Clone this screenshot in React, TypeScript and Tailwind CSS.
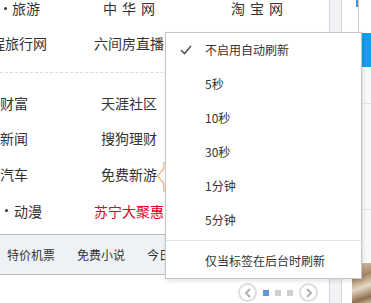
import { Fragment } from 'react';

const menuItems = ['不启用自动刷新', '5秒', '10秒', '30秒', '1分钟', '5分钟'];

function Dot({ className }: { className: string }) {
  return <span className={`inline-block w-[3px] h-[3px] rounded-full bg-[#333] ${className}`} />;
}

function Spaced({ chars }: { chars: string[] }) {
  return (
    <span className="flex gap-[5px]">
      {chars.map((c) => (
        <span key={c}>{c}</span>
      ))}
    </span>
  );
}

function Circle({ dir }: { dir: 'left' | 'right' }) {
  return (
    <span className="w-[19px] h-[19px] rounded-full border-2 border-[#dedede] flex items-center justify-center">
      <svg width="8" height="10" viewBox="0 0 8 10">
        {dir === 'left' ? (
          <polyline points="6,1 2,5 6,9" fill="none" stroke="#b0b0b0" strokeWidth="2" />
        ) : (
          <polyline points="2,1 6,5 2,9" fill="none" stroke="#b0b0b0" strokeWidth="2" />
        )}
      </svg>
    </span>
  );
}

export default function App() {
  return (
    <div className="relative w-[371px] h-[303px] overflow-hidden bg-white flex text-[#333] font-['Noto_Sans_CJK_SC','Noto_Sans',sans-serif]">
      {/* left panel */}
      <div className="w-[329px] flex flex-col text-[14px] leading-none">
        <div className="-mt-[9px] h-[34px] flex items-center">
          <div className="w-[64px] flex items-center pl-[4px]">
            <Dot className="mr-[5px]" />
            <span>旅游</span>
          </div>
          <div className="w-[130px] flex justify-center">
            <Spaced chars={['中', '华', '网']} />
          </div>
          <div className="w-[126px] flex justify-center">
            <Spaced chars={['淘', '宝', '网']} />
          </div>
        </div>
        <div className="h-[35px] flex items-center">
          <div className="w-[64px] whitespace-nowrap">
            <span className="-ml-[23px] inline-block">携程旅行网</span>
          </div>
          <div className="w-[130px] flex justify-center whitespace-nowrap">六间房直播</div>
        </div>
        <div className="mt-[12px] border-t border-dashed border-[#dcdcdc]" />
        <div className="mt-[12px] h-[35px] flex items-center">
          <div className="w-[64px]">财富</div>
          <div className="w-[130px] flex justify-center">天涯社区</div>
        </div>
        <div className="h-[35px] flex items-center">
          <div className="w-[64px]">新闻</div>
          <div className="w-[130px] flex justify-center">搜狗理财</div>
        </div>
        <div className="h-[37px] flex items-center">
          <div className="w-[64px]">汽车</div>
          <div className="w-[130px] flex justify-center">免费新游</div>
        </div>
        <div className="h-[37px] flex items-center">
          <div className="w-[64px] flex items-center pl-[5px]">
            <Dot className="mr-[6px]" />
            <span>动漫</span>
          </div>
          <div className="w-[130px] flex justify-center text-[#e0001b] whitespace-nowrap">苏宁大聚惠</div>
        </div>
        <div className="mt-[5px] h-[41px] border-y border-[#b9bdc1] bg-[#eef2f4] flex items-center pl-[7px] gap-[22px] text-[12px] whitespace-nowrap">
          <span>特价机票</span>
          <span>免费小说</span>
          <span>今日</span>
        </div>
        <div className="mt-[8px] flex justify-end items-center pr-[11px] gap-[6px]">
          <Circle dir="left" />
          <span className="w-[6px] h-[6px] bg-[#5f95d4]" />
          <span className="w-[6px] h-[6px] bg-[#cfcfcf]" />
          <span className="w-[6px] h-[6px] bg-[#cfcfcf]" />
          <Circle dir="right" />
        </div>
      </div>

      {/* scroll strip */}
      <div className="w-[13px] h-full border-x border-[#d2d6da] bg-[#f1f3f5]" />

      {/* right side */}
      <div className="w-[16px] h-full flex justify-end">
        <span className="w-[2px] h-[7px] bg-[#4a90d9]" />
      </div>
      <div className="w-[13px] h-full border-l border-[#c8c8c8] flex flex-col">
        <div className="h-[33px] bg-white" />
        <div className="h-[34px] bg-[#139ff0]" />
        <div className="h-[37px] bg-[#f8f8f8] border-b border-[#e6e6e6]" />
        <div className="h-[106px] bg-[#f8f8f8] border-b border-[#e6e6e6]" />
        <div className="flex-1 bg-[#f8f8f8]" />
      </div>

      {/* photo in the corner */}
      <div className="absolute left-[352px] top-[263px] w-[19px] h-[40px] bg-[linear-gradient(160deg,#d9cbbb_0%,#a78866_35%,#e6d8c6_60%,#8e6f52_85%,#cdb89e_100%)]" />

      {/* tooltip edge beside 免费新游 */}
      <svg className="absolute left-[155px] top-[160px]" width="11" height="34" viewBox="155 160 11 34">
        <polyline
          points="164,162 163.5,169 157.5,176 163.5,183 164,192"
          fill="#fffaf4"
          stroke="#e3b488"
          strokeWidth="1.2"
        />
      </svg>

      {/* refresh menu */}
      <div className="absolute left-[165px] top-[32px] w-[197px] bg-white border border-[#c6c6c6] shadow-[1px_2px_4px_rgba(0,0,0,0.12)] text-[12px] leading-none">
        {menuItems.map((label, i) => (
          <div key={label} className="h-[34px] flex items-center">
            <span className="w-[39px] pl-[14px] flex items-center">
              {i === 0 && (
                <svg width="12" height="10" viewBox="0 0 12 10">
                  <polyline points="1,5 4.5,8.5 11,1" fill="none" stroke="#555" strokeWidth="1.6" />
                </svg>
              )}
            </span>
            <span>{label}</span>
          </div>
        ))}
        <Fragment>
          <div className="my-[3px] h-px bg-[#e3e3e3]" />
          <div className="h-[34px] flex items-center pl-[39px]">仅当标签在后台时刷新</div>
        </Fragment>
      </div>
    </div>
  );
}
